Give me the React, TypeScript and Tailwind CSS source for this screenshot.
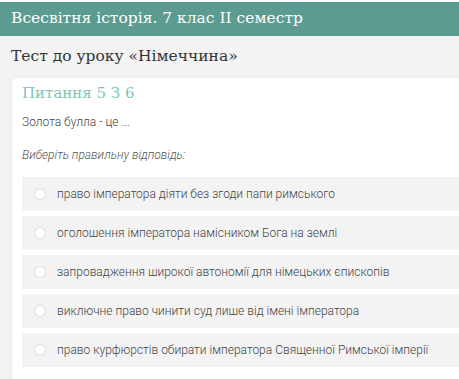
import React from "react";

const options = [
  "право імператора діяти без згоди папи римського",
  "оголошення імператора намісником Бога на землі",
  "запровадження широкої автономії для німецьких єпископів",
  "виключне право чинити суд лише від імені імператора",
  "право курфюрстів обирати імператора Священної Римської імперії",
];

export default function App() {
  return (
    <div className="w-[459px] h-[379px] overflow-hidden bg-[#f3f3f3]">
      <div className="h-[2px] bg-white" />
      <div className="h-[34px] bg-[#5c9b90] flex items-center pl-[11px]">
        <span className="text-white text-[15.5px] font-['DejaVu_Serif',serif] whitespace-nowrap">
          Всесвітня історія. 7 клас II семестр
        </span>
      </div>
      <div className="h-[42px] flex items-center pl-[11px]">
        <span className="text-[#333] text-[15.5px] font-['DejaVu_Serif',serif] whitespace-nowrap">
          Тест до уроку «Німеччина»
        </span>
      </div>
      <div className="ml-[12px] bg-white rounded-tl-[4px] shadow-[0_0_3px_rgba(0,0,0,0.08)] pl-[10px] pt-[5px] h-[400px] font-['Roboto',sans-serif]">
        <div className="text-[#7dc5b8] text-[15px] font-['DejaVu_Serif',serif] h-[20px] leading-[20px]">
          Питання 5 З 6
        </div>
        <div className="mt-[12px] text-[12px] font-light text-[#444] leading-[14px]">
          Золота булла - це ...
        </div>
        <div className="mt-[19px] text-[12px] font-light italic text-[#555] leading-[14px]">
          Виберіть правильну відповідь:
        </div>
        <div className="mt-[15px] flex flex-col gap-[5px]">
          {options.map((o) => (
            <div
              key={o}
              className="h-[34px] bg-[#f3f3f3] flex items-center pl-[12px] whitespace-nowrap"
            >
              <span className="w-[12px] h-[12px] rounded-full border border-[#dcdcdc] bg-white shrink-0" />
              <span className="ml-[11px] text-[12px] font-light text-[#444]">{o}</span>
            </div>
          ))}
        </div>
      </div>
    </div>
  );
}
